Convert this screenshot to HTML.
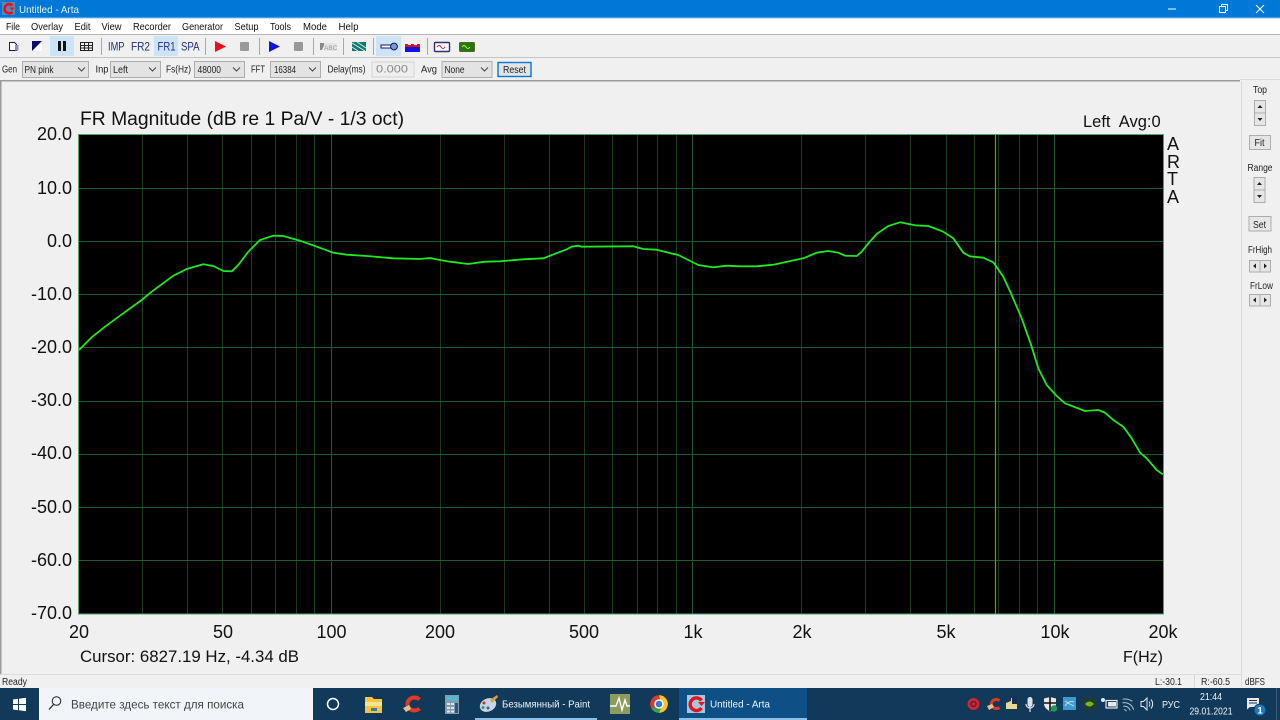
<!DOCTYPE html>
<html><head><meta charset="utf-8"><title>Untitled - Arta</title>
<style>
html,body{margin:0;padding:0;width:1280px;height:720px;overflow:hidden;background:#f0f0f0}
svg{display:block}
text{font-family:"Liberation Sans","Noto Sans CJK JP",sans-serif}
.ui{font-size:10px;fill:#222}
.m{font-size:10.5px;fill:#111}
.g{font-size:18px;fill:#111}
.tb{font-size:11.5px;fill:#1f2f80}
.tk{font-size:10.5px;fill:#f0f4f8}
.c{fill:#e3e3e3;stroke:#adadad}
.b{fill:#e6e6e6;stroke:#adadad}
.chev{fill:none;stroke:#444;stroke-width:1}
</style></head><body>
<svg width="1280" height="720" viewBox="0 0 1280 720" xmlns="http://www.w3.org/2000/svg">
<rect width="1280" height="720" fill="#f0f0f0"/>
<!-- title bar -->
<rect width="1280" height="18" fill="#0078d7"/>
<rect y="18" width="1280" height="16" fill="#fff"/>
<rect y="17.5" width="1280" height="1" fill="#8cc4ee"/>
<rect x="2" y="2" width="13" height="13" fill="#5c88b0"/>
<path d="M12.5 5.5A4.6 4.6 0 1 0 12.5 12" fill="none" stroke="#e8101c" stroke-width="2.6"/>
<path d="M9.5 7.5h5l-2.500 3z" fill="#e8101c"/>
<text x="19" y="13" font-size="10.5" fill="#e6f2fb" textLength="60" lengthAdjust="spacingAndGlyphs">Untitled - Arta</text>
<path d="M1168 9h8" stroke="#fff"/>
<rect x="1219.5" y="6.5" width="6" height="6" fill="none" stroke="#fff"/>
<path d="M1221.5 6.5v-2h6v6h-2" fill="none" stroke="#fff"/>
<path d="M1256 5l8 8M1264 5l-8 8" stroke="#fff"/>
<!-- menu -->
<g class="m">
<text x="6" y="30" textLength="14" lengthAdjust="spacingAndGlyphs">File</text><text x="31" y="30" textLength="32" lengthAdjust="spacingAndGlyphs">Overlay</text><text x="74.5" y="30" textLength="16" lengthAdjust="spacingAndGlyphs">Edit</text><text x="101.5" y="30" textLength="20" lengthAdjust="spacingAndGlyphs">View</text><text x="133" y="30" textLength="38" lengthAdjust="spacingAndGlyphs">Recorder</text><text x="182" y="30" textLength="41" lengthAdjust="spacingAndGlyphs">Generator</text><text x="234.5" y="30" textLength="24" lengthAdjust="spacingAndGlyphs">Setup</text><text x="270" y="30" textLength="21" lengthAdjust="spacingAndGlyphs">Tools</text><text x="303" y="30" textLength="24" lengthAdjust="spacingAndGlyphs">Mode</text><text x="338.5" y="30" textLength="20" lengthAdjust="spacingAndGlyphs">Help</text>
</g>
<rect y="34" width="1280" height="1" fill="#b4b4b4"/>
<rect y="57" width="1280" height="1" fill="#c4c4c4"/>
<!-- toolbar -->
<rect x="50" y="36" width="24" height="20" fill="#cce4f7"/>
<rect x="154" y="36" width="24" height="20" fill="#cce4f7"/>
<rect x="376" y="36" width="25" height="20" fill="#cce4f7"/>
<g fill="#a8a8a8">
<rect x="101" y="38" width="1" height="17"/><rect x="205" y="38" width="1" height="17"/><rect x="259" y="38" width="1" height="17"/><rect x="313" y="38" width="1" height="17"/><rect x="343" y="38" width="1" height="17"/><rect x="373" y="38" width="1" height="17"/><rect x="427" y="38" width="1" height="17"/>
</g>
<path d="M9.5 42.5h5l2 2v6h-7z" fill="#fff" stroke="#1c1c50"/><rect x="15" y="45" width="3.5" height="5.5" fill="#9090b0"/>
<rect x="32" y="41" width="10" height="10" fill="#fff"/><path d="M32 41h10l-10 10z" fill="#0a0a70"/>
<rect x="58" y="41" width="3" height="10" fill="#111"/><rect x="63" y="41" width="3" height="10" fill="#111"/>
<rect x="80.5" y="42.5" width="12" height="8" fill="#eee" stroke="#222"/><path d="M80.5 45.5h12M80.5 48h12M84.5 42.5v8M88.5 42.5v8" stroke="#222" fill="none"/>
<text class="tb" x="108" y="50.5" textLength="16.500" lengthAdjust="spacingAndGlyphs">IMP</text><text class="tb" x="131" y="50.5" textLength="19" lengthAdjust="spacingAndGlyphs">FR2</text><text class="tb" x="157.5" y="50.5" textLength="18" lengthAdjust="spacingAndGlyphs">FR1</text><text class="tb" x="181" y="50.5" textLength="18.500" lengthAdjust="spacingAndGlyphs">SPA</text>
<path d="M215 41l11 5.5-11 5.5z" fill="#e8101c"/>
<rect x="240" y="42" width="9" height="9" rx="1" fill="#999"/>
<path d="M269 41l11 5.5-11 5.5z" fill="#1414d8"/>
<rect x="294" y="42" width="9" height="9" rx="1" fill="#999"/>
<path d="M320 43h5l-3 7h-2z" fill="#888"/><rect x="324" y="43" width="13" height="8" fill="#e4e4e4"/><text x="324" y="50" font-size="6.5" fill="#999">ABC</text>
<rect x="352" y="42" width="14" height="9" fill="#107870"/><path d="M352 43l13 8M357 42l9 6M352 47l6 4" stroke="#d8f0ec"/>
<rect x="381" y="45" width="11" height="3" fill="#fff" stroke="#10107a"/><circle cx="394" cy="46.5" r="3.4" fill="#7c9cc8" stroke="#10107a"/>
<rect x="405" y="47" width="15" height="5" fill="#1212e0"/><path d="M405 47v-3h3v1h3v-1h3v1h3v-1h3v3z" fill="#e0101c"/>
<rect x="434.5" y="42.5" width="15" height="9" rx="1" fill="#fff" stroke="#303070" stroke-width="1.4"/><path d="M437 47q2-3 4 0t4 0" fill="none" stroke="#d02020"/>
<rect x="459.5" y="42.5" width="15" height="9" rx="1" fill="#1f7a12" stroke="#606020"/><path d="M462 47q2-3 4 0t4 0" fill="none" stroke="#d8e820"/>
<!-- second bar -->
<g class="ui">
<text x="2" y="72.5" textLength="15" lengthAdjust="spacingAndGlyphs">Gen</text><text x="95.500" y="72.5" textLength="13" lengthAdjust="spacingAndGlyphs">Inp</text><text x="166" y="72.5" textLength="25" lengthAdjust="spacingAndGlyphs">Fs(Hz)</text><text x="251" y="72.5" textLength="14" lengthAdjust="spacingAndGlyphs">FFT</text><text x="327.5" y="72.5" textLength="38" lengthAdjust="spacingAndGlyphs">Delay(ms)</text><text x="421" y="72.5" textLength="16" lengthAdjust="spacingAndGlyphs">Avg</text>
</g>
<rect class="c" x="22.5" y="61.5" width="66" height="16"/><rect class="c" x="110.5" y="61.5" width="50" height="16"/><rect class="c" x="194.5" y="61.5" width="50" height="16"/><rect class="c" x="270.5" y="61.5" width="50" height="16"/><rect class="c" x="442" y="61.5" width="50" height="16"/>
<g class="ui"><text x="24.5" y="73" textLength="29" lengthAdjust="spacingAndGlyphs">PN pink</text><text x="113" y="73" textLength="15" lengthAdjust="spacingAndGlyphs">Left</text><text x="197.5" y="73" textLength="23.500" lengthAdjust="spacingAndGlyphs">48000</text><text x="274" y="73" textLength="22" lengthAdjust="spacingAndGlyphs">16384</text><text x="444.5" y="73" textLength="20" lengthAdjust="spacingAndGlyphs">None</text></g>
<path class="chev" d="M78 67.5l3.5 3.5 3.5-3.5M149 67.5l3.5 3.5 3.5-3.5M233 67.5l3.5 3.5 3.5-3.5M309 67.5l3.5 3.5 3.5-3.5M481 67.5l3.5 3.5 3.5-3.5"/>
<rect x="372" y="62" width="42" height="15" fill="#eee" stroke="#d4d4d4"/><text x="376" y="72.5" font-size="11" fill="#888" textLength="32" lengthAdjust="spacingAndGlyphs">0.000</text>
<rect x="498" y="62.5" width="33" height="14" fill="#e4e4e4" stroke="#0078d7" stroke-width="1.4"/><text x="503" y="73" class="ui" textLength="23" lengthAdjust="spacingAndGlyphs">Reset</text>
<!-- frame lines -->
<rect y="80" width="1240" height="1.5" fill="#9c9c9c"/>
<rect x="0" y="80" width="1.5" height="594" fill="#9c9c9c"/>
<rect x="1241" y="81" width="1" height="606" fill="#dcdcdc"/>
<rect x="1240" y="79" width="40" height="1" fill="#dcdcdc"/>
<!-- plot -->
<rect x="79" y="135" width="1084" height="479" fill="#000"/>
<g stroke="#18401f" stroke-width="1" fill="none">
<path d="M142.5 135V614M187.5 135V614M222.5 135V614M251.5 135V614M275.5 135V614M296.5 135V614M314.5 135V614M440.5 135V614M504.5 135V614M549.5 135V614M584.5 135V614M612.5 135V614M637.5 135V614M657.5 135V614M676.5 135V614M801.5 135V614M865.5 135V614M910.5 135V614M946.5 135V614M974.5 135V614M998.5 135V614M1019.5 135V614M1037.5 135V614"/>
</g>
<g stroke="#225a2e" stroke-width="1" fill="none">
<path d="M331.5 135V614M692.5 135V614M1054.5 135V614"/>
<path d="M79 188.5H1163M79 241.5H1163M79 294.5H1163M79 347.5H1163M79 401.5H1163M79 454.5H1163M79 507.5H1163M79 560.5H1163"/>
</g>
<path d="M995.5 135V614" stroke="#8a8a30" stroke-width="1.2"/>
<rect x="78.5" y="134.5" width="1085" height="479.5" fill="none" stroke="#4aa868"/>
<polyline fill="none" stroke="#20e820" stroke-width="1.8" stroke-linejoin="round" points="79,350 91.7,337.3 105,326.7 123.3,313.3 141.7,300 151.7,291.7 173.3,275.7 186.7,269 203.3,264.3 213.3,266 223.3,271 231.7,271.3 238.3,265 248.3,251.7 260,240 273.3,235.7 283.3,236 300,240.7 316.7,246.7 333.3,252.7 346.7,254.7 366.7,256 393.3,258.3 420,259 430,258 440,260 450,261.7 468.3,264 485,261.7 500,261.3 523.3,259.3 543.3,258.3 566.7,249.3 571.7,246.7 578.3,245.7 581.7,246.7 633.3,246.3 643.3,249 656.7,249.7 666.7,252.3 678.3,255 688.3,260 698.3,265 713.3,267.3 726.7,265.7 740,266.3 756.7,266.3 773.3,264.7 803.3,258.3 816.7,252.7 828.3,251 838.3,252.7 845,255.7 856.7,256 861.7,251.7 868.3,243.3 876.7,234 888.3,226 900,222.3 915,225.3 928.3,226 943.3,231.7 953.3,238.3 963.3,252.7 970,256.3 983.3,257.7 993.3,262.3 1003.3,276.7 1011.7,295 1021.7,318.3 1031.7,346.7 1038.3,368.3 1046.7,385 1056.7,396 1065,403.3 1085,411 1098.3,410 1105,412.7 1113.3,420 1123.3,426.7 1131.7,438.3 1140,452.7 1146.7,458.3 1156.7,470 1161.7,473.7 1163,474"/>
<!-- plot text -->
<g class="g">
<text x="80" y="125" style="font-size:19.300px" textLength="324" lengthAdjust="spacingAndGlyphs">FR Magnitude (dB re 1 Pa/V - 1/3 oct)</text>
<text x="1083" y="127" style="font-size:16.500px;white-space:pre" xml:space="preserve">Left  Avg:0</text>
<g text-anchor="end"><text x="72" y="140">20.0</text><text x="72" y="194">10.0</text><text x="72" y="247">0.0</text><text x="72" y="300">-10.0</text><text x="72" y="353">-20.0</text><text x="72" y="406">-30.0</text><text x="72" y="459">-40.0</text><text x="72" y="513">-50.0</text><text x="72" y="566">-60.0</text><text x="72" y="619">-70.0</text></g>
<g text-anchor="middle"><text x="79" y="638">20</text><text x="223" y="638">50</text><text x="331.5" y="638">100</text><text x="440" y="638">200</text><text x="584" y="638">500</text><text x="693" y="638">1k</text><text x="802" y="638">2k</text><text x="946" y="638">5k</text><text x="1055" y="638">10k</text><text x="1163" y="638">20k</text></g>
<text x="80" y="662" style="font-size:16.500px" textLength="219" lengthAdjust="spacingAndGlyphs">Cursor: 6827.19 Hz, -4.34 dB</text>
<text x="1123" y="662" style="font-size:16px">F(Hz)</text>
<text x="1167" y="150">A</text><text x="1167" y="168">R</text><text x="1167" y="185">T</text><text x="1167" y="203">A</text>
</g>
<!-- right panel -->
<rect class="b" x="1249.5" y="135.5" width="21" height="14"/>
<rect class="b" x="1249" y="216.5" width="22" height="14.5"/>
<g class="ui"><text x="1253" y="93" textLength="14" lengthAdjust="spacingAndGlyphs">Top</text><text x="1247.500" y="171" textLength="25" lengthAdjust="spacingAndGlyphs">Range</text><text x="1248" y="253" textLength="24" lengthAdjust="spacingAndGlyphs">FrHigh</text><text x="1250" y="289" textLength="23" lengthAdjust="spacingAndGlyphs">FrLow</text><text x="1254.500" y="146" textLength="10" lengthAdjust="spacingAndGlyphs">Fit</text><text x="1253" y="228" textLength="13" lengthAdjust="spacingAndGlyphs">Set</text></g>
<rect class="b" x="1254.5" y="100.5" width="11" height="12.5"/><rect class="b" x="1254.5" y="113" width="11" height="12.5"/>
<rect class="b" x="1254" y="177.5" width="11" height="12.5"/><rect class="b" x="1254" y="190" width="11" height="12.5"/>
<rect class="b" x="1249.5" y="260.5" width="10.5" height="11.5"/><rect class="b" x="1260" y="260.5" width="10.5" height="11.5"/>
<rect class="b" x="1249.5" y="294.5" width="10.5" height="11.5"/><rect class="b" x="1260" y="294.5" width="10.5" height="11.5"/>
<path fill="#222" d="M1260 105l-2.500 3h5zM1260 121l-2.500-3h5zM1259.500 182l-2.500 3h5zM1259.500 198l-2.500-3h5zM1253 266l3-2.500v5zM1267 266l-3-2.500v5zM1253 300l3-2.500v5zM1267 300l-3-2.500v5z"/>
<!-- status bar -->
<rect y="674" width="1241" height="1" fill="#dcdcdc"/>
<rect x="1194" y="675" width="1" height="13" fill="#d8d8d8"/>
<g class="ui"><text x="2" y="685" textLength="25" lengthAdjust="spacingAndGlyphs">Ready</text><text x="1155" y="685" textLength="27" lengthAdjust="spacingAndGlyphs">L:-30.1</text><text x="1201" y="685" textLength="29" lengthAdjust="spacingAndGlyphs">R:-60.5</text><text x="1245" y="685" textLength="20" lengthAdjust="spacingAndGlyphs">dBFS</text></g>
<!-- taskbar -->
<rect y="688" width="1280" height="32" fill="#10395a"/>
<path fill="#fff" d="M13 699.500l5-.7v5.200h-5zM19 698.700l7-1v6.300h-7zM13 705h5v5.200l-5-.7zM19 705h7v6.300l-7-1z"/>
<rect x="39" y="688" width="274" height="32" fill="#f1f4f8"/>
<circle cx="56.500" cy="701" r="4.300" fill="none" stroke="#222"/><path d="M53.500 704.500l-4.500 5" stroke="#222" stroke-width="1.200"/>
<text x="71" y="708.500" font-size="12" fill="#444" textLength="173" lengthAdjust="spacingAndGlyphs">Введите здесь текст для поиска</text>
<circle cx="333" cy="704" r="5.500" fill="none" stroke="#fff" stroke-width="1.500"/>
<path d="M365 697h7l2 2h8v14h-17z" fill="#f4c542"/><rect x="365" y="702" width="17" height="4" fill="#fbe38e"/><rect x="371" y="708" width="6" height="3" fill="#3a78b8"/>
<path d="M419.500 699.500A7 6.500 0 1 0 419.500 708.500" fill="none" stroke="#e03a24" stroke-width="4"/><path d="M403 708l6-3 2 4-5 3z" fill="#e8c090"/>
<rect x="445" y="695" width="14" height="19" fill="#8a9aa8"/><rect x="447" y="696.500" width="10" height="4" fill="#46c0d8"/><path d="M447 703h3v2h-3zM451 703h3v2h-3zM447 707h3v2h-3zM451 707h3v2h-3zM447 710.500h3v2h-3zM451 710.500h3v2h-3z" fill="#dde3e8"/><rect x="455" y="703" width="3" height="10" fill="#1a5a90"/>
<rect x="475" y="718" width="122" height="2" fill="#8dc0e8"/>
<ellipse cx="488" cy="705" rx="8.500" ry="6.500" fill="#c8d4e4" transform="rotate(-25 488 705)"/><path d="M490 700l7-5 1 2-6 6z" fill="#d8a040"/><circle cx="484" cy="703" r="1.500" fill="#d03030"/><circle cx="488" cy="708" r="1.500" fill="#3060c0"/><circle cx="483" cy="707.500" r="1.500" fill="#30a050"/>
<text x="502" y="707.500" class="tk" textLength="88" lengthAdjust="spacingAndGlyphs">Безымянный - Paint</text>
<rect x="610" y="694" width="20" height="20" fill="#8c9c5c"/><path d="M610 706h6l3-8 3 12 3-10 2 6h3" fill="none" stroke="#fff" stroke-width="1.400"/>
<circle cx="659" cy="704" r="8.800" fill="#d83c30"/><path d="M659 704l7.600 4.400a8.800 8.800 0 0 1-15.200 0z" fill="#3aa050"/><path d="M659 695.200a8.800 8.800 0 0 1 8.800 8.800 8.800 8.800 0 0 1-8.800 8.800l3-6z" fill="#f8c820"/><circle cx="659" cy="704" r="4" fill="#3878d8" stroke="#fff" stroke-width="1.400"/>
<rect x="679" y="688" width="128" height="32" fill="#0e4f86"/>
<rect x="679" y="718" width="128" height="2" fill="#8dc0e8"/>
<rect x="687" y="695" width="18" height="18" fill="#a4c8dc"/><path d="M701.500 700.500A6.300 6.300 0 1 0 701.500 708" fill="none" stroke="#e8101c" stroke-width="3.400"/><path d="M698 702h7l-3.500 4z" fill="#e8101c"/>
<text x="710" y="707.500" class="tk" textLength="60" lengthAdjust="spacingAndGlyphs">Untitled - Arta</text>
<!-- tray -->
<circle cx="973.500" cy="704" r="6" fill="#d8202c"/><circle cx="973.500" cy="704" r="2.500" fill="none" stroke="#10395a" stroke-width="1.200"/>
<path d="M999.500 700.500A5 4.500 0 1 0 999.500 707.500" fill="none" stroke="#e03a24" stroke-width="3"/><path d="M987 706l5-2 2 3-5 3z" fill="#e8c090"/>
<path d="M1006 703l5-2v-3h6v11h-11z" fill="#e8d890"/><rect x="1012" y="697" width="5" height="7" fill="#1c2c50"/>
<rect x="1027.500" y="697" width="5" height="10" rx="2.500" fill="#dce0e4"/><path d="M1030 707v5M1026 704a4 4 0 0 0 8 0" fill="none" stroke="#dce0e4" stroke-width="1.200"/>
<path d="M1044 698.500l6-1.500 6 1.500v5c0 4-3 6-6 8-3-2-6-4-6-8z" fill="#e8e8e8"/><path d="M1050 697v14M1044 703h12" stroke="#111" stroke-width="1.600"/><circle cx="1054" cy="708.500" r="3.200" fill="#1a9a50"/>
<rect x="1063" y="697" width="13" height="13" fill="#3c9ad0"/><path d="M1065 706q4-6 9-4M1065 701q4 3 9 5" fill="none" stroke="#b0e8e0"/>
<rect x="1083" y="698" width="13" height="12" rx="1" fill="#243a2c"/><path d="M1085 704q4-5 9 0q-5 5-9 0z" fill="#74b820"/>
<circle cx="1103" cy="700" r="2" fill="#e8e8e8"/><rect x="1106" y="700.500" width="11" height="7.500" fill="none" stroke="#e8e8e8" stroke-width="1.200"/><rect x="1108" y="702" width="8" height="4.500" fill="#e8e8e8"/>
<path d="M1123 709a2 2 0 0 1 2 2M1123 705.500a6 6 0 0 1 6 5.500M1123 702a9.500 9.500 0 0 1 9.500 9M1124 698.500a13 13 0 0 1 9 4" transform="rotate(-12 1127 705)" fill="none" stroke="#b8c4cc" stroke-width="1"/>
<path d="M1141 701.500h2.500l3.500-3.500v12l-3.500-3.500h-2.500z" fill="none" stroke="#e8e8e8"/><path d="M1149 701.500a4 4 0 0 1 0 5M1151 699.500a7 7 0 0 1 0 9" fill="none" stroke="#e8e8e8"/>
<text x="1162" y="708" class="tk" textLength="18" lengthAdjust="spacingAndGlyphs">РУС</text>
<text x="1200" y="700" class="tk" textLength="22" lengthAdjust="spacingAndGlyphs">21:44</text>
<text x="1189.500" y="714.500" class="tk" textLength="43" lengthAdjust="spacingAndGlyphs">29.01.2021</text>
<path d="M1247 698h12v9h-9l-3 2.500z" fill="#e8e8e8"/><path d="M1249 700.500h8M1249 703h8" stroke="#10395a"/>
<circle cx="1260" cy="710" r="6" fill="#1c78c0" stroke="#10395a"/><text x="1260" y="713.500" font-size="9.500" font-weight="bold" fill="#fff" text-anchor="middle">1</text>
<rect x="1276" y="688" width="1" height="32" fill="#3a5a78"/>
</svg>
</body></html>
